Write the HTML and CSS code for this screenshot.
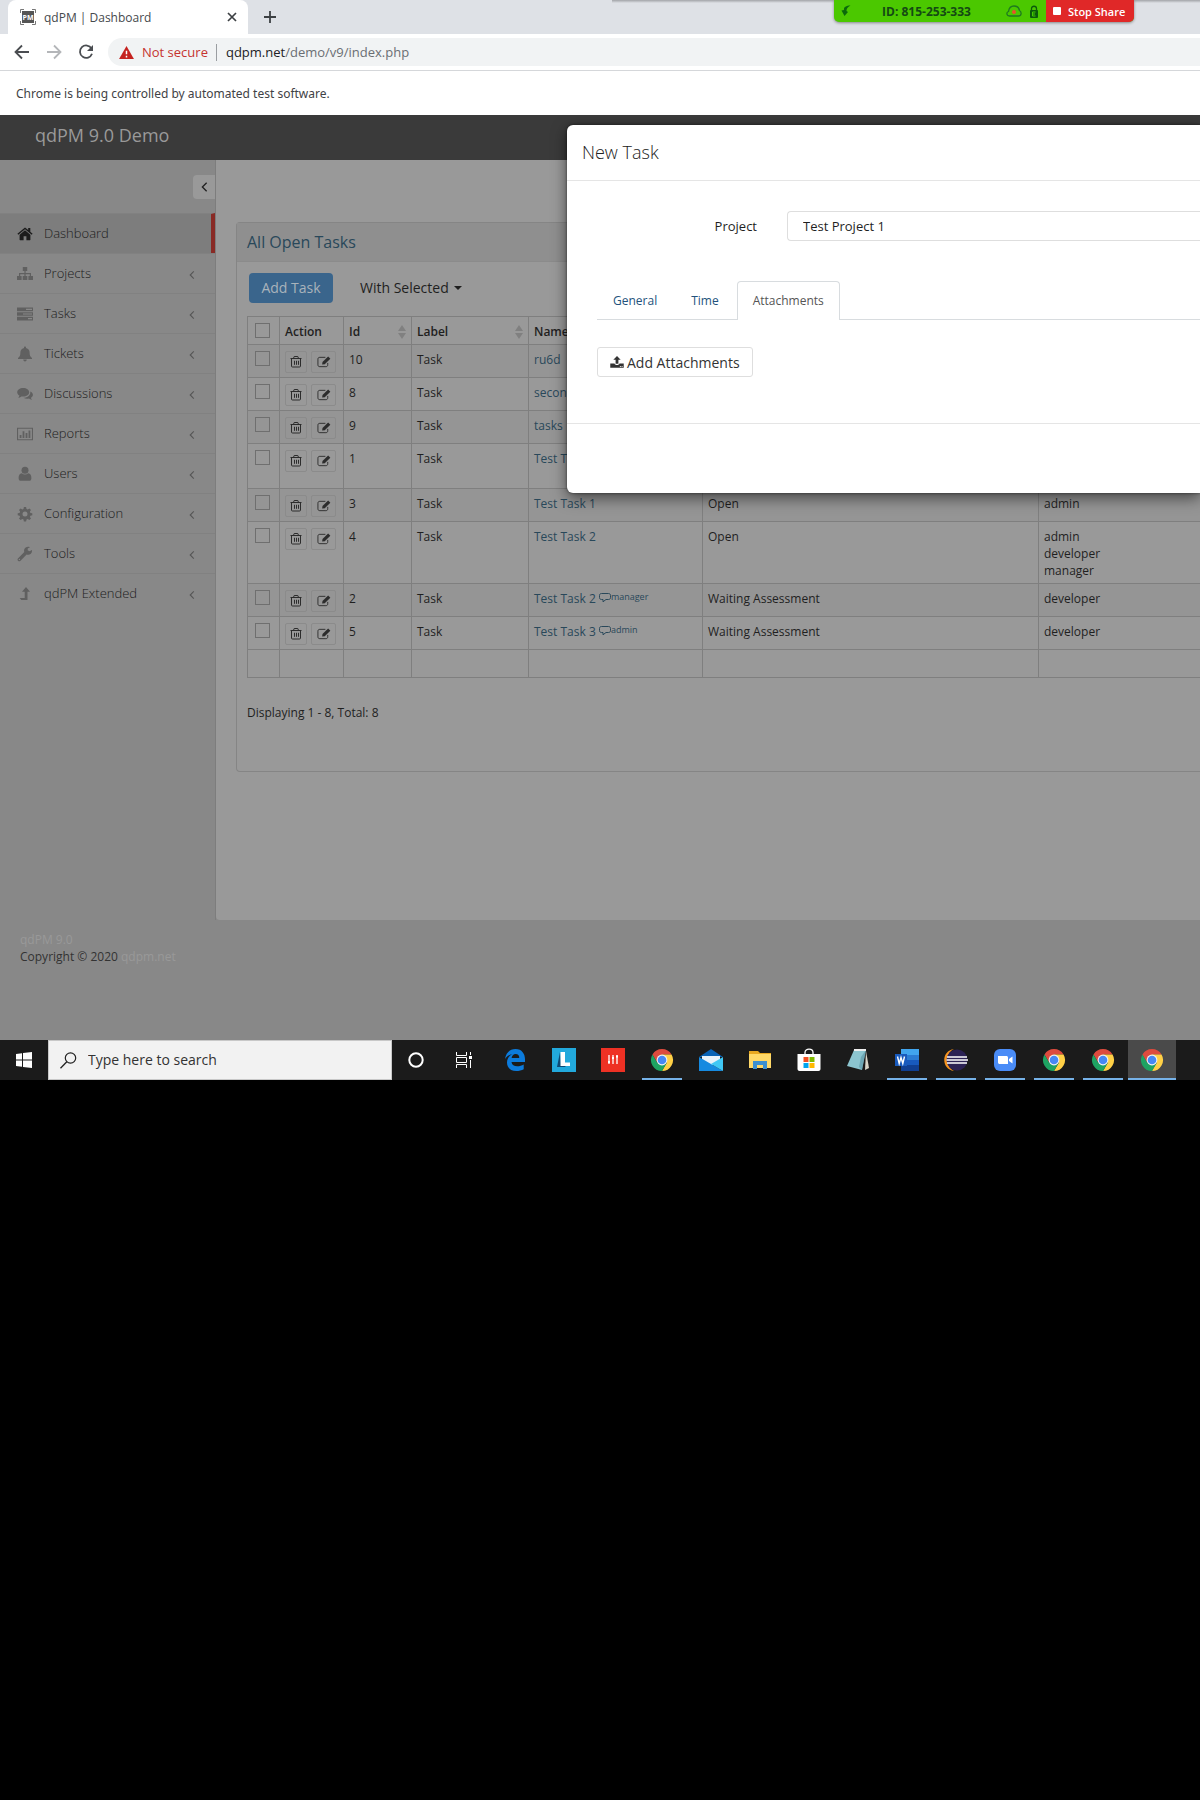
FILE: index.html
```html
<!DOCTYPE html>
<html lang="en">
<head>
<meta charset="utf-8">
<meta name="viewport" content="width=device-width, initial-scale=1">
<title>qdPM | Dashboard</title>
<link rel="stylesheet" href="styles.css">
</head>
<body>
<svg class="sprite" aria-hidden="true">
  <symbol id="i-home" viewBox="0 0 16 16"><path d="M8 4.2 2.6 8.7v5c0 .3.2.5.5.5h3.5v-4h2.8v4h3.5c.3 0 .5-.2.5-.5v-5z"/><path d="M8 1.4.4 7.7l.9 1.1L8 3.3l6.7 5.5.9-1.1-2.3-2V2h-2.1v2z"/></symbol>
  <symbol id="i-sitemap" viewBox="0 0 16 16"><path d="M5.8 1h4.4v4H8.6v2H14v3h2v4h-4.600v-4h1.400V8.200H8.600V10h1.700v4H5.700v-4h1.700V8.200H3.200V10h1.400v4H0v-4h2V7h5.400V5H5.800z"/></symbol>
  <symbol id="i-tasks" viewBox="0 0 16 16"><path fill-rule="evenodd" d="M0 1.500h16v3.700H0zm9 1.200v1.300h6V2.700zM0 6.200h16v3.600H0zm6 1.200v1.200h9V7.400zM0 10.800h16v3.700H0zm11 1.200v1.300h4V12z"/></symbol>
  <symbol id="i-bell" viewBox="0 0 16 16"><path d="M8 .5c.6 0 1 .4 1 1v.4c2.600.5 3.600 2.500 3.600 4.600 0 3 .8 4.300 2.400 5.500V13H1v-1c1.600-1.200 2.400-2.500 2.400-5.500C3.400 4.400 4.400 2.400 7 1.900v-.4c0-.6.4-1 1-1zM6.200 13.600h3.600C9.800 14.700 9 15.500 8 15.500s-1.800-.8-1.800-1.900z"/></symbol>
  <symbol id="i-comments" viewBox="0 0 16 16"><path d="M6.200 2C9.600 2 12.200 3.900 12.200 6.300s-2.600 4.300-6 4.300c-.6 0-1.200-.1-1.800-.2-.9.700-2 1.200-3.200 1.400.6-.7 1-1.400 1.200-2.200C1 8.800.2 7.600.2 6.300.2 3.900 2.800 2 6.200 2z"/><path d="M13.300 5.500c1.600.7 2.600 1.900 2.600 3.300 0 1.200-.8 2.300-2 3 .2.800.6 1.500 1.100 2.100-1.200-.2-2.200-.6-3.100-1.300-.6.100-1.100.2-1.700.2-1.400 0-2.700-.4-3.700-1 4.300 0 7.300-2.600 6.800-6.300z"/></symbol>
  <symbol id="i-chart" viewBox="0 0 18 16"><path fill-rule="evenodd" d="M0 1h18v14H0zm1.200 1.200v11.600h15.600V2.200zM3 9h2v3.500H3zm3.300-4h2v7.500h-2zm3.400 2h2v5.500h-2zM13 4h2v8.500h-2z"/></symbol>
  <symbol id="i-user" viewBox="0 0 16 16"><circle cx="8" cy="4.300" r="3.500"/><path d="M4.800 7.200C6.700 9 9.300 9 11.200 7.200c2.300.3 3.200 2.300 3.200 5 0 1.600-.9 2.600-2.300 2.600H3.900c-1.400 0-2.300-1-2.300-2.600 0-2.700.9-4.700 3.200-5z"/></symbol>
  <symbol id="i-cog" viewBox="0 0 16 16"><path fill-rule="evenodd" d="m6.900 1h2.200l.4 2 1.200.5 1.700-1.100L14 4l-1.100 1.600.5 1.300 1.900.3v2.100l-1.900.4-.5 1.200 1.100 1.700-1.600 1.500-1.700-1.100-1.200.5-.4 1.900H6.900l-.4-1.900-1.200-.5-1.700 1.100L2 12.600l1.100-1.700-.5-1.200-1.900-.4V7.200l1.900-.3.500-1.300L2 4l1.600-1.600 1.700 1.100L6.500 3zM8 5.600a2.500 2.500 0 1 0 0 5 2.500 2.500 0 0 0 0-5z"/></symbol>
  <symbol id="i-wrench" viewBox="0 0 16 16"><path fill-rule="evenodd" d="M14.900 3.900 12.500 5.300 10.700 4.300V2.600L13 1.200C11 .2 8.600.8 7.500 2.800c-.6 1.200-.6 2.300-.2 3.300L.9 12.500c-1.200 1.400.9 3.500 2.400 2.400L9.600 8.500c2.900 1.200 6.100-1.300 5.300-4.600zM2.400 12.700a.7.700 0 1 1 0 1.400.7.700 0 0 1 0-1.400z"/></symbol>
  <symbol id="i-levelup" viewBox="0 0 16 16"><path d="M9 1l4 4.800h-2.500V14H4.300l-1.600-2h5V5.800H5z"/></symbol>
  <symbol id="i-left" viewBox="0 0 10 14"><path d="M7.500 2 2.500 7l5 5" fill="none" stroke="currentColor" stroke-width="1.500"/></symbol>
  <symbol id="i-trash" viewBox="0 0 14 14"><path d="M1.500 3.500h11M4.500 3.300 5.200 1.500h3.600l.7 1.800M2.500 3.700V11c0 .7.300 1 1 1h7c.7 0 1-.3 1-1V3.700M5.500 5.800v4M7.500 5.800v4M9.500 5.800v4" fill="none" stroke="currentColor"/></symbol>
  <symbol id="i-edit" viewBox="0 0 15 14"><path d="M9 2H3C1.700 2 1 2.700 1 4v6c0 1.300.7 2 2 2h6.500c1.300 0 2-.7 2-2V8" fill="none" stroke="currentColor"/><path d="m5.500 9.800.4-2.800 6-6 2.400 2.400-6 6z"/></symbol>
  <symbol id="i-upload" viewBox="0 0 16 16"><path d="M8 1 3.800 5.500h2.600V10h3.200V5.500h2.600z"/><path fill-rule="evenodd" d="M.3 9.700h4.900c.2 1.100 1.300 1.700 2.800 1.700s2.600-.6 2.800-1.700h4.900v5H.3zm11 3v1h1v-1zm2 0v1h1v-1z"/></symbol>
  <symbol id="i-comment" viewBox="0 0 12 11"><path d="M2.500 1.500h7c1.300 0 2 .7 2 2v2c0 1.300-.7 2-2 2H7L4 9.800V7.500H2.500c-1.300 0-2-.7-2-2v-2c0-1.300.7-2 2-2z" fill="none" stroke="currentColor"/></symbol>
  <symbol id="i-sort" viewBox="0 0 8 14"><path d="M4 0l4 6H0zM4 14l4-6H0z"/></symbol>
  <symbol id="i-chrome" viewBox="0 0 24 24"><path fill="#dd4b3e" d="M2.470 6.500A11 11 0 0 1 21.530 6.500H12l-4.760 8.250z"/><path fill="#ffd046" d="M21.530 6.500A11 11 0 0 1 12 23l4.760-8.250L12 6.500z"/><path fill="#1ea362" d="M12 23A11 11 0 0 1 2.470 6.500l4.770 8.250h9.520z"/><circle cx="12" cy="12" r="5.400" fill="#f3f3f3"/><circle cx="12" cy="12" r="4.300" fill="#4688f4"/></symbol>
</svg>

<div class="browser">
  <div class="tabstrip">
    <div class="tab">
      <svg class="favicon" viewBox="0 0 16 16" aria-hidden="true"><path d="M.5 4V.5H4M12 .5h3.500V4M15.500 12v3.500H12M4 15.500H.5V12" fill="none" stroke="#777"/><rect x="2" y="2" width="12" height="12" fill="#555"/><text x="8" y="11" text-anchor="middle" class="favicon-text">PM</text></svg>
      <span class="tab-title">qdPM | Dashboard</span>
      <button class="plain-button" aria-label="Close tab"><svg width="10" height="10" viewBox="0 0 10 10"><path d="m1 1 8 8M9 1 1 9" stroke="#3c4043" stroke-width="1.700"/></svg></button>
    </div>
    <button class="plain-button" aria-label="New tab"><svg width="12" height="12" viewBox="0 0 12 12"><path d="M6 0v12M0 6h12" stroke="#3c4043" stroke-width="1.800"/></svg></button>
  </div>
  <div class="share-bar">
    <svg width="10" height="12" viewBox="0 0 10 12" aria-hidden="true"><path fill="#0b6a0b" d="M9.500.5C5 .5 2.500 2 3 5L.5 5.500 3.500 11 7 7 5.500 6C5.500 3.500 6.500 2 9.500.5z"/></svg>
    <span class="share-id">ID: 815-253-333</span>
    <svg width="16" height="12" viewBox="0 0 16 12" aria-hidden="true"><path d="M3.500 11C.5 11 0 7.500 2.500 6.500 3 2.500 5 1 8 1c3.500 0 5 2 5.500 4.500C16 7 15.500 11 12.500 11z" fill="none" stroke="#1f7a1f" stroke-width="1.300"/><circle cx="8" cy="7" r="2" fill="#e8502c"/></svg>
    <svg width="10" height="13" viewBox="0 0 10 13" aria-hidden="true"><path d="M2.500 6V3.500C2.500.5 7.500.5 7.500 3.500V6" fill="none" stroke="#0b5a0b" stroke-width="1.300"/><rect x="1" y="5" width="8" height="8" rx="1" fill="#0b5a0b"/><path d="M6.500 7h-3v4h3M3.500 9h2.500" fill="none" stroke="#4c0"/></svg>
    <button class="stop-share"><span class="stop-square"></span>Stop Share</button>
  </div>
  <div class="toolbar">
    <button class="plain-button" aria-label="Back"><svg width="16" height="16" viewBox="0 0 16 16"><path d="M15 8H2M8 1.500 1.500 8 8 14.500" fill="none" stroke="#4a4d51" stroke-width="1.800"/></svg></button>
    <button class="plain-button" aria-label="Forward"><svg width="16" height="16" viewBox="0 0 16 16"><path d="M1 8h13M8 1.500 14.500 8 8 14.500" fill="none" stroke="#b4b6b9" stroke-width="1.800"/></svg></button>
    <button class="plain-button" aria-label="Reload"><svg width="16" height="16" viewBox="0 0 16 16"><path d="M13.500 4.500A6.200 6.200 0 1 0 14 9.800" fill="none" stroke="#4a4d51" stroke-width="1.800"/><path d="M15 1v6H9z" fill="#4a4d51"/></svg></button>
    <div class="address">
      <svg width="15" height="13" viewBox="0 0 16 14" aria-hidden="true"><path d="M8 0l8 14H0z" fill="#c5221f"/><path d="M8 5v4M8 10.500v2" stroke="#fff" stroke-width="1.600"/></svg>
      <span class="not-secure">Not secure</span>
      <span class="url"><b>qdpm.net</b>/demo/v9/index.php</span>
    </div>
  </div>
  <div class="infobar">Chrome is being controlled by automated test software.</div>
</div>

<div class="app">
  <header class="app-header">qdPM 9.0 Demo</header>
  <div class="app-body">
    <nav class="sidebar">
      <div class="sidebar-top"><button class="sidebar-toggle" aria-label="Collapse menu"><svg width="9" height="12"><use href="#i-left"/></svg></button></div>
      <a class="nav-item nav-item-active" href="#"><svg class="nav-icon"><use href="#i-home"/></svg><span>Dashboard</span></a>
      <a class="nav-item" href="#"><svg class="nav-icon"><use href="#i-sitemap"/></svg><span>Projects</span><svg class="nav-arrow"><use href="#i-left"/></svg></a>
      <a class="nav-item" href="#"><svg class="nav-icon"><use href="#i-tasks"/></svg><span>Tasks</span><svg class="nav-arrow"><use href="#i-left"/></svg></a>
      <a class="nav-item" href="#"><svg class="nav-icon"><use href="#i-bell"/></svg><span>Tickets</span><svg class="nav-arrow"><use href="#i-left"/></svg></a>
      <a class="nav-item" href="#"><svg class="nav-icon"><use href="#i-comments"/></svg><span>Discussions</span><svg class="nav-arrow"><use href="#i-left"/></svg></a>
      <a class="nav-item" href="#"><svg class="nav-icon"><use href="#i-chart"/></svg><span>Reports</span><svg class="nav-arrow"><use href="#i-left"/></svg></a>
      <a class="nav-item" href="#"><svg class="nav-icon"><use href="#i-user"/></svg><span>Users</span><svg class="nav-arrow"><use href="#i-left"/></svg></a>
      <a class="nav-item" href="#"><svg class="nav-icon"><use href="#i-cog"/></svg><span>Configuration</span><svg class="nav-arrow"><use href="#i-left"/></svg></a>
      <a class="nav-item" href="#"><svg class="nav-icon"><use href="#i-wrench"/></svg><span>Tools</span><svg class="nav-arrow"><use href="#i-left"/></svg></a>
      <a class="nav-item" href="#"><svg class="nav-icon"><use href="#i-levelup"/></svg><span>qdPM Extended</span><svg class="nav-arrow"><use href="#i-left"/></svg></a>
    </nav>
    <main class="content">
      <section class="panel">
        <h2 class="panel-title">All Open Tasks</h2>
        <div class="panel-body">
          <div class="actions">
            <button class="button-primary">Add Task</button>
            <button class="dropdown">With Selected <span class="caret"></span></button>
          </div>
          <table class="tasks">
            <colgroup><col class="col-check"><col class="col-action"><col class="col-id"><col class="col-label"><col class="col-name"><col class="col-status"><col></colgroup>
            <thead>
              <tr><th><input type="checkbox" aria-label="Select all"></th><th>Action</th><th><div class="sortable">Id<svg class="sort"><use href="#i-sort"/></svg></div></th><th><div class="sortable">Label<svg class="sort"><use href="#i-sort"/></svg></div></th><th>Name</th><th></th><th></th></tr>
            </thead>
            <tbody>
              <tr><td><input type="checkbox" aria-label="Select task 10"></td><td><div class="row-actions"><button aria-label="Delete"><svg><use href="#i-trash"/></svg></button><button class="edit" aria-label="Edit"><svg><use href="#i-edit"/></svg></button></div></td><td>10</td><td>Task</td><td><a href="#">ru6d</a></td><td></td><td></td></tr>
              <tr><td><input type="checkbox" aria-label="Select task 8"></td><td><div class="row-actions"><button aria-label="Delete"><svg><use href="#i-trash"/></svg></button><button class="edit" aria-label="Edit"><svg><use href="#i-edit"/></svg></button></div></td><td>8</td><td>Task</td><td><a href="#">second</a></td><td></td><td></td></tr>
              <tr><td><input type="checkbox" aria-label="Select task 9"></td><td><div class="row-actions"><button aria-label="Delete"><svg><use href="#i-trash"/></svg></button><button class="edit" aria-label="Edit"><svg><use href="#i-edit"/></svg></button></div></td><td>9</td><td>Task</td><td><a href="#">tasks</a></td><td></td><td></td></tr>
              <tr class="two-line"><td><input type="checkbox" aria-label="Select task 1"></td><td><div class="row-actions"><button aria-label="Delete"><svg><use href="#i-trash"/></svg></button><button class="edit" aria-label="Edit"><svg><use href="#i-edit"/></svg></button></div></td><td>1</td><td>Task</td><td><a href="#">Test Task</a></td><td></td><td></td></tr>
              <tr><td><input type="checkbox" aria-label="Select task 3"></td><td><div class="row-actions"><button aria-label="Delete"><svg><use href="#i-trash"/></svg></button><button class="edit" aria-label="Edit"><svg><use href="#i-edit"/></svg></button></div></td><td>3</td><td>Task</td><td><a href="#">Test Task 1</a></td><td>Open</td><td>admin</td></tr>
              <tr><td><input type="checkbox" aria-label="Select task 4"></td><td><div class="row-actions"><button aria-label="Delete"><svg><use href="#i-trash"/></svg></button><button class="edit" aria-label="Edit"><svg><use href="#i-edit"/></svg></button></div></td><td>4</td><td>Task</td><td><a href="#">Test Task 2</a></td><td>Open</td><td>admin<br>developer<br>manager</td></tr>
              <tr><td><input type="checkbox" aria-label="Select task 2"></td><td><div class="row-actions"><button aria-label="Delete"><svg><use href="#i-trash"/></svg></button><button class="edit" aria-label="Edit"><svg><use href="#i-edit"/></svg></button></div></td><td>2</td><td>Task</td><td><a href="#">Test Task 2</a> <a class="comment" href="#"><svg><use href="#i-comment"/></svg>manager</a></td><td>Waiting Assessment</td><td>developer</td></tr>
              <tr><td><input type="checkbox" aria-label="Select task 5"></td><td><div class="row-actions"><button aria-label="Delete"><svg><use href="#i-trash"/></svg></button><button class="edit" aria-label="Edit"><svg><use href="#i-edit"/></svg></button></div></td><td>5</td><td>Task</td><td><a href="#">Test Task 3</a> <a class="comment" href="#"><svg><use href="#i-comment"/></svg>admin</a></td><td>Waiting Assessment</td><td>developer</td></tr>
            </tbody>
            <tfoot><tr><td>&nbsp;</td><td></td><td></td><td></td><td></td><td></td><td></td></tr></tfoot>
          </table>
          <p class="summary">Displaying 1 - 8, Total: 8</p>
        </div>
      </section>
    </main>
  </div>
  <footer class="app-footer"><a href="#">qdPM 9.0</a><br>Copyright © 2020 <a href="#">qdpm.net</a></footer>

  <div class="modal" role="dialog" aria-labelledby="modal-title">
    <h1 class="modal-title" id="modal-title">New Task</h1>
    <div class="modal-body">
      <div class="field">
        <label for="project">Project</label>
        <select id="project"><option>Test Project 1</option></select>
      </div>
      <div class="tabs" role="tablist">
        <a href="#" role="tab">General</a>
        <a href="#" role="tab">Time</a>
        <a class="tab-current" href="#" role="tab" aria-selected="true">Attachments</a>
      </div>
      <button class="attach"><svg width="14" height="14"><use href="#i-upload"/></svg>Add Attachments</button>
    </div>
    <div class="modal-footer"></div>
  </div>
</div>

<div class="taskbar">
  <button class="start" aria-label="Start"><svg width="16" height="16" viewBox="0 0 16 16"><path fill="#fff" d="M0 2l6-.8v6.300H0zM7 1l9-1v7.500H7zM0 8.500h6v6.300L0 14zM7 8.500h9V16l-9-1z"/></svg></button>
  <div class="search">
    <svg width="17" height="17" viewBox="0 0 17 17" aria-hidden="true"><circle cx="10.500" cy="6" r="5.200" fill="none" stroke="#222" stroke-width="1.200"/><path d="M6.800 9.800.5 16.300" stroke="#222" stroke-width="1.300"/></svg>
    <input type="text" placeholder="Type here to search" aria-label="Type here to search">
  </div>
  <div class="system">
    <button aria-label="Cortana"><svg width="16" height="16" viewBox="0 0 16 16"><circle cx="8" cy="8" r="6.700" fill="none" stroke="#fff" stroke-width="2"/></svg></button>
    <button aria-label="Task view"><svg width="16" height="16" viewBox="0 0 16 16"><path d="M.5 0v3.500h10V0M.5 16v-3.500h10V16M.5 5.500h10v5H.5zM14.500 0v3M14.500 8v8" fill="none" stroke="#fff"/><path fill="#fff" d="M13 4h3v3h-3z"/></svg></button>
  </div>
  <div class="apps">
    <button aria-label="Edge"><svg viewBox="0 0 24 24"><path fill="#0c7bdc" d="M2 11C3 4.500 7 1 12.500 1 19 1 22 6 22 11v3H8.500c.3 3 2.700 4.300 5.700 4.300 2.500 0 4.700-.7 6.500-1.800v4.700C18.700 22.400 16 23 13.200 23 7.500 23 4 19.500 4 14.500c0-4 2.300-6.900 5.500-8.500C6 6.500 3.500 8.500 2 11zM8.600 10h7.700c0-2.500-1.200-4-3.700-4-2.300 0-3.700 1.700-4 4z"/></svg></button>
    <button aria-label="L"><svg viewBox="0 0 24 24"><path fill="#22a9dc" d="M0 0h24v24H0z"/><path fill="#0d4a75" d="M8 4 5 19h9l-5-4z"/><path fill="#fff" d="M8.500 4H13v10.500h5V18H8.500z"/></svg></button>
    <button aria-label="Mixer"><svg viewBox="0 0 24 24"><path fill="#ee3124" d="M0 0h24v24H0z"/><path d="M8 7v9M12 7v9M16 7v9" stroke="#fff" stroke-width="1.300"/><path d="M7 14h2M11 10h2M15 8.500h2" stroke="#fff" stroke-width="2"/></svg></button>
    <button class="open" aria-label="Chrome"><svg><use href="#i-chrome"/></svg></button>
    <button aria-label="Mail"><svg viewBox="0 0 24 24"><path fill="#0862b5" d="M0 9 12 1l12 8z"/><path fill="#e8f2fa" d="M3 8h18v9H3z"/><path fill="#168ae0" d="M0 9l24 14H0z"/><path fill="#40c8f5" d="m24 9-12 7 12 7z"/></svg></button>
    <button aria-label="File Explorer"><svg viewBox="0 0 24 24"><path fill="#e8a820" d="M1 3h9l2 2h11v5H1z"/><path fill="#ffd968" d="M1 6h22v14H1z"/><path fill="#3c90d0" d="M5 13h14v8h-4v-4H9v4H5z"/></svg></button>
    <button aria-label="Store"><svg viewBox="0 0 24 24"><path d="M8 7V4.500C8 0 16 0 16 4.500V7" fill="none" stroke="#fff" stroke-width="1.300"/><path fill="#fff" d="M.5 6h23v15c0 1-1 2-2 2h-19c-1 0-2-1-2-2z"/><path fill="#f25022" d="M6.500 9H11.500v5h-5z"/><path fill="#7fba00" d="M12.500 9h5v5h-5z"/><path fill="#00a4ef" d="M6.500 15h5v5h-5z"/><path fill="#ffb900" d="M12.500 15h5v5h-5z"/></svg></button>
    <button aria-label="Notepad"><svg viewBox="0 0 24 24"><path fill="#d9d5c8" d="m20 3 3 17-4 2z"/><path fill="#8cc5d0" d="M8 2h12l-4 20L1 18z"/><path fill="#4e8999" d="m15 9-2 10 3 3 4-20z" opacity=".5"/><path d="M8 2h12" stroke="#eee" stroke-width="2"/></svg></button>
    <button class="open" aria-label="Word"><svg viewBox="0 0 24 24"><path fill="#41a5ee" d="M6 1h18v6H6z"/><path fill="#2b7cd3" d="M6 7h18v5H6z"/><path fill="#185abd" d="M6 12h18v5H6z"/><path fill="#103f91" d="M6 17h18v6H6z"/><path fill="#185abd" d="M0 6h12v12H0z"/><path d="m2.500 8.500 1.700 7L6 9.500l1.800 6 1.700-7" fill="none" stroke="#fff" stroke-width="1.400"/></svg></button>
    <button class="open" aria-label="Eclipse"><svg viewBox="0 0 24 24"><path fill="#f7941e" d="M10 1C2 4 1 19 10 23-3 21-3 3 10 1z"/><circle cx="13" cy="12" r="10.500" fill="#2c2255"/><path d="M3 9h20M2.500 12H24M3 15h20" stroke="#fff" stroke-width="1.700"/></svg></button>
    <button class="open" aria-label="Zoom"><svg viewBox="0 0 24 24"><rect x="1" y="1" width="22" height="22" rx="6" fill="#4a8cf7"/><path fill="#fff" d="M5 8h8c1.500 0 2 .5 2 2v6H7c-1.500 0-2-.5-2-2zM16 11l3.500-2.500v7L16 13z"/></svg></button>
    <button class="open" aria-label="Chrome"><svg><use href="#i-chrome"/></svg></button>
    <button class="open" aria-label="Chrome"><svg><use href="#i-chrome"/></svg></button>
    <button class="open focused" aria-label="Chrome"><svg><use href="#i-chrome"/></svg></button>
  </div>
</div>
</body>
</html>
```

FILE: styles.css
```css
* { box-sizing: border-box; }

body {
  margin: 0;
  background: #000;
  color: #1f1f1f;
  font: 12px/17px "Open Sans", "Noto Sans", sans-serif;
  overflow-x: hidden;
}

a { color: inherit; text-decoration: none; }
button, input, select { font: inherit; color: inherit; }
button { margin: 0; padding: 0; border: 0; background: none; }
svg { display: block; fill: currentColor; flex: none; }
.sprite { position: absolute; width: 0; height: 0; }
.plain-button { display: flex; }

/* Browser window */
.browser { position: relative; background: #fff; }
.tabstrip {
  display: flex;
  align-items: center;
  gap: 16px;
  height: 34px;
  padding-left: 8px;
  background: linear-gradient(#a2a4a8, #dee1e6) right top / 49% 3px no-repeat #dee1e6;
}
.tab {
  display: flex;
  align-items: center;
  gap: 8px;
  width: 240px;
  height: 34px;
  padding: 0 11px 0 12px;
  border-radius: 8px 8px 0 0;
  background: #fff;
  color: #45494d;
}
.tab-title { flex: 1; }
.favicon { width: 16px; height: 16px; }
.favicon-text { font: bold 7px "Open Sans", sans-serif; fill: #fff; }
.share-bar {
  position: absolute;
  top: 0;
  right: 66px;
  display: flex;
  align-items: center;
  gap: 7px;
  width: 300px;
  height: 22px;
  padding-left: 7px;
  border-radius: 0 0 5px 5px;
  background: #4bc800;
  color: #144a14;
  font-size: 12px;
  font-weight: 700;
  overflow: hidden;
  box-shadow: 0 1px 3px #0006;
}
.share-id { flex: 1; padding-right: 4px; text-align: center; }
.stop-share {
  display: flex;
  align-items: center;
  gap: 7px;
  width: 88px;
  height: 22px;
  padding-left: 7px;
  background: #e02828;
  color: #fff;
  font-size: 11px;
  font-weight: 600;
}
.stop-square { width: 8px; height: 8px; border-radius: 1px; background: #fff; }
.toolbar {
  display: flex;
  align-items: center;
  gap: 16px;
  height: 37px;
  padding-left: 14px;
  border-bottom: 1px solid #d5d7da;
}
.address {
  display: flex;
  flex: 1;
  align-items: center;
  height: 28px;
  margin-left: -2px;
  padding-left: 11px;
  border-radius: 14px 0 0 14px;
  background: #f1f3f4;
  font-size: 13px;
}
.not-secure {
  margin: 0 8px;
  color: #c5332f;
}
.url { padding-left: 9px; border-left: 1px solid #9a9da1; color: #6a6e73; }
.url b { color: #202124; font-weight: 400; }
.infobar {
  padding: 14px 16px 13px;
  color: #3f4245;
  font-family: "Noto Sans", "Open Sans", sans-serif;
}

/* Application */
.app { position: relative; background: #888; }
.app-header {
  height: 45px;
  padding: 9px 35px;
  background: #3a3a3a;
  color: #999;
  font-size: 18px;
  line-height: 22px;
}
.app-body { display: flex; min-height: 760px; }
.sidebar { flex: none; width: 216px; border-right: 1px solid #7d7d7d; }
.sidebar-top { display: flex; justify-content: flex-end; height: 53px; padding-top: 15px; }
.sidebar-toggle {
  display: flex;
  align-items: center;
  justify-content: center;
  width: 22px;
  height: 24px;
  border-radius: 4px 0 0 4px;
  background: #999;
}
.nav-item {
  display: flex;
  align-items: center;
  height: 40px;
  gap: 11px;
  padding: 0 18px 0 17px;
  border-top: 1px solid #818181;
  color: #1c1c1c;
  font-size: 13px;
  font-weight: 300;
}
.nav-item span { flex: 1; }
.nav-item-active { border-right: 4px solid #892a25; background: #7d7d7d; }
.nav-icon { width: 16px; height: 16px; color: #606060; }
.nav-item-active .nav-icon { color: #1c1c1c; }
.nav-arrow { width: 10px; height: 10px; margin-top: 3px; color: #555; }

.content {
  flex: 1;
  min-width: 0;
  padding: 62px 0 0 20px;
  border-radius: 0 0 0 4px;
  background: #999;
}
.panel {
  border: 1px solid #858585;
  border-right: 0;
  border-radius: 4px 0 0 4px;
  background: #999;
}
.panel-title {
  margin: 0;
  padding: 9px 10px;
  border-bottom: 1px solid #8b8b8b;
  background: #8f8f8f;
  color: #29485a;
  font-size: 16px;
  font-weight: 400;
  line-height: 20px;
}
.panel-body { padding: 11px 0 24px 10px; }
.actions {
  display: flex;
  gap: 27px;
  padding-left: 2px;
  margin-bottom: 13px;
  font-size: 14px;
}
.button-primary {
  width: 84px;
  height: 30px;
  padding-bottom: 1px;
  border-radius: 4px;
  background: #3a658c;
  color: #a9b3bb;
}
.dropdown { display: flex; align-items: center; gap: 5px; padding-bottom: 1px; }
.caret { border: 4px solid transparent; border-top-color: currentColor; border-bottom: 0; }

.tasks { width: 100%; border-collapse: collapse; table-layout: fixed; }
.col-check { width: 32px; }
.col-action { width: 64px; }
.col-id { width: 68px; }
.col-label { width: 117px; }
.col-name { width: 174px; }
.col-status { width: 336px; }
.tasks th, .tasks td {
  padding: 6px 5px 4px;
  border: 1px solid #7f7f7f;
  text-align: left;
  vertical-align: top;
}
.tasks tr > :last-child { border-right: 0; }
.tasks th { font-weight: 600; }
.tasks tbody tr { height: 33px; }
.tasks tbody tr:nth-child(odd) { background: #959595; }
.tasks tbody .two-line { height: 45px; }
.tasks td:first-child, .tasks th:first-child { padding-left: 7px; }
.tasks a { color: #29485a; }
.tasks input {
  display: block;
  width: 15px;
  height: 15px;
  margin: 0;
  border: 1px solid #6f6f6f;
  appearance: none;
}
.sortable { display: flex; align-items: center; justify-content: space-between; }
.sort { width: 8px; height: 14px; color: #808080; }
.row-actions { display: flex; gap: 4px; }
.row-actions button {
  display: flex;
  align-items: center;
  justify-content: center;
  width: 22px;
  height: 22px;
  border: 1px solid #8b8b8b;
  border-radius: 2px;
  color: #2c2c2c;
}
.row-actions .edit { width: 25px; }
.row-actions svg { width: 14px; height: 14px; }
.comment { font-size: 9px; line-height: 10px; vertical-align: 3px; }
.comment svg { display: inline-block; width: 12px; height: 11px; vertical-align: -3px; }
.summary { margin: 26px 0; }

.app-footer {
  min-height: 120px;
  padding: 11px 20px;
  color: #333;
}
.app-footer a { color: #999; }

/* New task dialog */
.modal {
  position: absolute;
  top: 10px;
  left: 567px;
  right: 0;
  border-radius: 6px 0 0 6px;
  background: #fff;
  box-shadow: 0 5px 15px #0008, 0 0 3px #0008;
}
.modal-title {
  margin: 0;
  padding: 15px;
  border-bottom: 1px solid #e5e5e5;
  color: #222;
  font-size: 18px;
  font-weight: 300;
  line-height: 25px;
}
.modal-body { padding: 30px 0 46px 30px; }
.field { display: flex; align-items: center; gap: 30px; }
.field label { width: 160px; text-align: right; font-size: 13px; }
.field select {
  flex: 1;
  height: 30px;
  padding: 0 15px;
  border: 1px solid #dedede;
  border-right: 0;
  border-radius: 4px 0 0 4px;
  background: #fff;
  font-size: 13px;
  appearance: none;
}
.tabs {
  display: flex;
  gap: 2px;
  margin: 40px 0 27px;
  border-bottom: 1px solid #d8dcdf;
}
.tabs a {
  padding: 10px 15px 11px;
  border: 1px solid transparent;
  border-bottom: 0;
  border-radius: 4px 4px 0 0;
  margin-bottom: -1px;
  color: #23527c;
}
.tabs .tab-current { border-color: #d8dcdf; background: #fff; color: #555; }
.attach {
  display: flex;
  align-items: center;
  gap: 3px;
  height: 30px;
  padding: 0 12px;
  border: 1px solid #dedede;
  border-radius: 3px;
  color: #333;
  font-size: 14px;
}
.modal-footer { height: 70px; border-top: 1px solid #e5e5e5; }

/* Windows taskbar */
.taskbar { display: flex; height: 40px; background: #1b1b1b; }
.start { display: flex; align-items: center; justify-content: center; width: 48px; }
.search {
  display: flex;
  align-items: center;
  gap: 11px;
  width: 344px;
  padding-left: 11px;
  border: 1px solid #c8c8c8;
  background: #f2f2f2;
}
.search input {
  flex: 1;
  min-width: 0;
  padding: 0;
  border: 0;
  background: none;
  font-size: 14px;
  line-height: 20px;
}
.search input::placeholder { color: #333; opacity: 1; }
.system, .apps { display: flex; }
.system button, .apps button {
  display: flex;
  align-items: center;
  justify-content: center;
  width: 48px;
}
.apps { gap: 1px; margin-left: 3px; }
.apps svg { width: 24px; height: 24px; }
.apps .open {
  background: linear-gradient(#76b2e8, #76b2e8) bottom / 40px 2px no-repeat;
}
.apps .focused { background-color: #4a4a4a; background-size: 48px 2px; }
```
